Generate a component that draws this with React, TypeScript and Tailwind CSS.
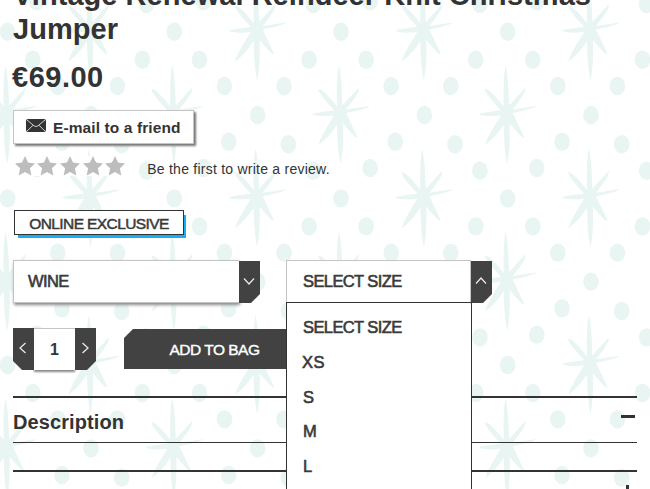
import React from "react";

// One repeat of the snowflake wallpaper
const TILE = 166.67;

const dots = [
    [7.6, 31.7],
    [32.8, 59.7],
    [142.4, 59.7],
    [57.8, 86],
    [117.4, 86],
    [91, 115],
    [62, 141.7],
    [121.7, 144.3],
    [36.8, 168],
    [146.6, 170.7],
];

const flakePath =
    "M-3-5C-3.4-22-3-38-1.2-46C1-38 2-22 2.4-6L18.4-23.5C21-21 11-8 6-2L29-5.5C31-4 14 0 6 1.5L17.4 25.5C17 29 8 18 3 12C3.4 26 2.8 42 .6 52.5C-2 42-2.8 26-3 13C-8 21-14 28-21.4 33.5C-21 28-12 14-6 4C-14 5-22 5-27.5 3.3C-28 1-14 0-6-1C-11-7-20-16-22-22C-20-25-10-14-3-5Z";

const sizes = ["SELECT SIZE", "XS", "S", "M", "L"];

function Wallpaper() {
    const tiles: number[][] = [];
    for (let row = -1; row < 3; row++) {
        for (let col = -1; col < 4; col++) {
            tiles.push([col * TILE, row * TILE]);
        }
    }
    return (
        <svg className="absolute inset-0" width="650" height="489" fill="#e9f5f3">
            <defs>
                <g id="tile">
                    {dots.map(([x, y]) => (
                        <ellipse key={x} cx={x} cy={y} rx="7.8" ry="9.2" />
                    ))}
                    <path d={flakePath} transform="translate(90 28)" />
                    <path d={flakePath} transform="translate(6.7 111.4)" />
                </g>
            </defs>
            {tiles.map(([x, y]) => (
                <use key={`${x} ${y}`} href="#tile" x={x} y={y} />
            ))}
        </svg>
    );
}

const arrows = {
    up: "M-5 2.5L0-3L5 2.5",
    down: "M-5-2.5L0 3L5-2.5",
    left: "M2.5-5L-3 0L2.5 5",
    right: "M-2.5-5L3 0L-2.5 5",
};

interface ArrowButtonProps {
    direction: keyof typeof arrows;
    cut?: "left" | "right";
}

function ArrowButton({ direction, cut = "right" }: ArrowButtonProps) {
    const shape = cut === "left" ? "M0 0H21V42H9L0 33Z" : "M0 0H21V33L12 42H0Z";
    return (
        <button type="button" className="relative block h-[42px] w-[21px] shrink-0">
            <svg width="21" height="42">
                <path d={shape} fill="#424242" />
                <path
                    d={arrows[direction]}
                    transform="translate(10 20)"
                    fill="none"
                    stroke="#e8e8e8"
                    strokeWidth="1.3"
                />
            </svg>
        </button>
    );
}

function Envelope() {
    return (
        <svg width="20" height="13" viewBox="0 0 20 13" className="mb-1">
            <rect width="20" height="13" rx="2" fill="#333" />
            <path
                d="M1 1L8 6.8Q10 8.4 12 6.8L19 1M1 12L7 6.3M19 12L13 6.3"
                fill="none"
                stroke="#ccc"
                strokeWidth="1"
            />
        </svg>
    );
}

function Stars() {
    return (
        <div className="flex gap-[2.7px] bg-white">
            {[1, 2, 3, 4, 5].map((n) => (
                <svg key={n} width="20" height="20" viewBox="0 0 20 20" fill="#bdbdbd">
                    <path d="M10 0L13 6.6L20 7.4L14.9 12.2L16.3 19.5L10 16L3.7 19.5L5.1 12.2L0 7.4L7 6.6Z" />
                </svg>
            ))}
        </div>
    );
}

export default function App() {
    return (
        <div className="relative h-[489px] w-[650px] overflow-hidden bg-white font-['Liberation_Sans',Arial,sans-serif] text-[#333]">
            <Wallpaper />
            <main className="relative flex flex-col pr-[13px] pl-[13px]">
                <h1 className="-mt-[22px] text-[29px] leading-[34px] font-bold tracking-[0.04px]">
                    Vintage Renewal Reindeer Knit Christmas Jumper
                </h1>
                <p className="mt-[14px] -ml-px text-[29px] leading-[34px] font-bold tracking-[0.5px]">€69.00</p>

                <button
                    type="button"
                    className="mt-[16px] flex h-[34px] w-[181px] items-center gap-[7px] border border-[#c4c4c4] bg-white pl-[12px] text-[15.5px] font-bold tracking-[0.1px] whitespace-nowrap shadow-[2px_2px_2px_#777]"
                >
                    <Envelope />
                    <span className="pt-0.5">E-mail to a friend</span>
                </button>

                <div className="mt-[12px] flex h-[20px] items-center pl-[1.5px]">
                    <Stars />
                    <span className="ml-[22px] pt-[6px] text-[14px] tracking-[0.24px]">
                        Be the first to write a review.
                    </span>
                </div>

                <div className="mt-[34px] ml-px flex h-[25px] w-[170px] items-center justify-center border border-[#333] bg-white pt-0.5 text-[15.5px] tracking-[-0.6px] whitespace-nowrap text-[#3a3a3a] shadow-[3px_4px_0_-1px_#17aef5] [-webkit-text-stroke:0.5px]">
                    ONLINE EXCLUSIVE
                </div>

                <div className="mt-[25px] flex h-[43px] items-end text-[16.5px] tracking-[-0.6px] text-[#3a3a3a] [-webkit-text-stroke:0.6px]">
                    <div className="flex h-[43px] w-[226px] items-center border border-r-0 border-[#c4c4c4] bg-white pl-[14px] shadow-[1px_2px_3px_#888]">
                        WINE
                    </div>
                    <ArrowButton direction="down" />
                    <div className="relative ml-[26px] flex h-[43px] w-[185px] items-center border border-[#c4c4c4] bg-white pl-[16px]">
                        SELECT SIZE
                        <ul className="absolute top-[41px] -left-px z-10 h-[220px] w-[186px] border border-[#333] bg-white pt-[7px] pl-[16px]">
                            {sizes.map((size) => (
                                <li
                                    key={size}
                                    className="h-[34.75px] leading-[34px] [&:nth-child(2)]:-ml-px [&:nth-child(2)]:tracking-[0.4px]"
                                >
                                    {size}
                                </li>
                            ))}
                        </ul>
                    </div>
                    <ArrowButton direction="up" />
                </div>

                <div className="mt-[25px] flex h-[42px] items-start">
                    <ArrowButton direction="left" cut="left" />
                    <div className="flex h-[42px] w-[41px] items-center justify-center border-t border-[#c4c4c4] bg-white text-[16px] font-bold shadow-[0_2px_2px_#888]">
                        1
                    </div>
                    <ArrowButton direction="right" />
                    <button
                        type="button"
                        className="mt-px ml-[28px] h-[40px] w-[181px] bg-[#424242] pt-0.5 text-[15.5px] tracking-[-0.5px] text-white [-webkit-text-stroke:0.4px] [clip-path:polygon(9px_0,100%_0,100%_100%,0_100%,0_9px)]"
                    >
                        ADD TO BAG
                    </button>
                </div>

                <section className="mt-[26px] h-[47px] w-[624px] border-t-[2.5px] border-b border-[#333]">
                    <h2 className="flex justify-between pt-[12px] text-[20px] leading-[24px] font-bold tracking-[0.1px]">
                        Description
                        <span className="mt-[5px] mr-[2px] h-[3px] w-[14px] bg-[#333]" />
                    </h2>
                </section>
                <section className="mt-[27px] flex h-[60px] w-[624px] justify-end border-t-[2.5px] border-[#333]">
                    <span className="mt-[13px] mr-[8px] h-[14px] w-[3px] bg-[#333]" />
                </section>
            </main>
        </div>
    );
}
